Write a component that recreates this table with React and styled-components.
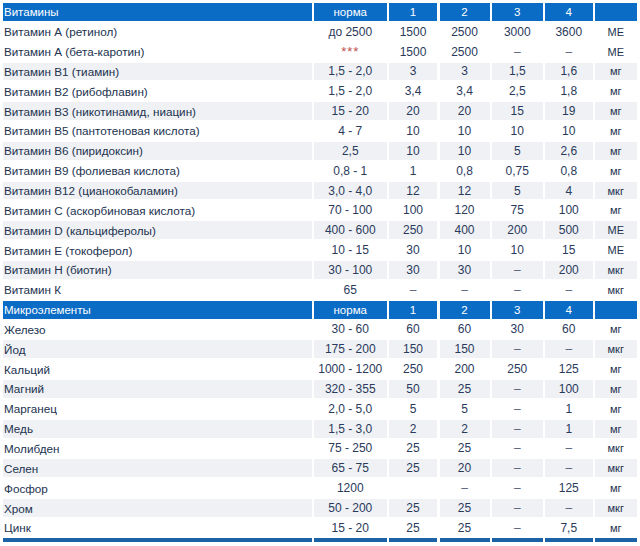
import React from "react";
import styled, { createGlobalStyle } from "styled-components";

const GlobalStyle = createGlobalStyle`
  html, body {
    margin: 0;
    padding: 0;
    background: #ffffff;
  }
  body {
    font-family: "Liberation Sans", Arial, sans-serif;
  }
`;

const DASH = "–";

const vitamins = [
  ["Витамин А (ретинол)", "до 2500", "1500", "2500", "3000", "3600", "МЕ"],
  ["Витамин А (бета-каротин)", "***", "1500", "2500", DASH, DASH, "МЕ"],
  ["Витамин В1 (тиамин)", "1,5 - 2,0", "3", "3", "1,5", "1,6", "мг"],
  ["Витамин В2 (рибофлавин)", "1,5 - 2,0", "3,4", "3,4", "2,5", "1,8", "мг"],
  ["Витамин В3 (никотинамид, ниацин)", "15 - 20", "20", "20", "15", "19", "мг"],
  ["Витамин В5 (пантотеновая кислота)", "4 - 7", "10", "10", "10", "10", "мг"],
  ["Витамин В6 (пиридоксин)", "2,5", "10", "10", "5", "2,6", "мг"],
  ["Витамин В9 (фолиевая кислота)", "0,8 - 1", "1", "0,8", "0,75", "0,8", "мг"],
  ["Витамин В12 (цианокобаламин)", "3,0 - 4,0", "12", "12", "5", "4", "мкг"],
  ["Витамин С (аскорбиновая кислота)", "70 - 100", "100", "120", "75", "100", "мг"],
  ["Витамин D (кальциферолы)", "400 - 600", "250", "400", "200", "500", "МЕ"],
  ["Витамин Е (токоферол)", "10 - 15", "30", "10", "10", "15", "МЕ"],
  ["Витамин Н (биотин)", "30 - 100", "30", "30", DASH, "200", "мкг"],
  ["Витамин К", "65", DASH, DASH, DASH, DASH, "мкг"],
];

const minerals = [
  ["Железо", "30 - 60", "60", "60", "30", "60", "мг"],
  ["Йод", "175 - 200", "150", "150", DASH, DASH, "мкг"],
  ["Кальций", "1000 - 1200", "250", "200", "250", "125", "мг"],
  ["Магний", "320 - 355", "50", "25", DASH, "100", "мг"],
  ["Марганец", "2,0 - 5,0", "5", "5", DASH, "1", "мг"],
  ["Медь", "1,5 - 3,0", "2", "2", DASH, "1", "мг"],
  ["Молибден", "75 - 250", "25", "25", DASH, DASH, "мкг"],
  ["Селен", "65 - 75", "25", "20", DASH, DASH, "мкг"],
  ["Фосфор", "1200", "", DASH, DASH, "125", "мг"],
  ["Хром", "50 - 200", "25", "25", DASH, DASH, "мкг"],
  ["Цинк", "15 - 20", "25", "25", DASH, "7,5", "мг"],
];

// vitamins: stripes start from В1, first two rows stay white
const vitaminStriped = (i) => i >= 2 && i % 2 === 0;
const mineralStriped = (i) => i % 2 === 1;

export default function App() {
  const renderRow = (row, striped, key) =>
    row.map((value, c) => {
      if (c === 0) {
        return (
          <NameCell key={key + "-" + c} $striped={striped}>
            {value}
          </NameCell>
        );
      }
      if (c === 6) {
        return (
          <UnitCell key={key + "-" + c} $striped={striped}>
            {value}
          </UnitCell>
        );
      }
      return (
        <ValueCell key={key + "-" + c} $striped={striped}>
          {value === "***" ? <Stars>***</Stars> : value === DASH ? <Dash>{DASH}</Dash> : value}
        </ValueCell>
      );
    });

  const renderHeader = (title, key) =>
    [title, "норма", "1", "2", "3", "4", ""].map((value, c) => (
      <HeadCell key={key + "-" + c} $left={c === 0}>
        {value}
      </HeadCell>
    ));

  return (
    <Page>
      <GlobalStyle />
      <Grid>
        {renderHeader("Витамины", "vh")}
        {vitamins.map((row, i) => renderRow(row, vitaminStriped(i), "v" + i))}
        {renderHeader("Микроэлементы", "mh")}
        {minerals.map((row, i) => renderRow(row, mineralStriped(i), "m" + i))}
        {Array.from({ length: 7 }).map((_, c) => (
          <FootBar key={"f" + c} />
        ))}
      </Grid>
    </Page>
  );
}

const Page = styled.div`
  padding: 3px 0 0 3px;
  width: 640px;
  height: 546px;
  box-sizing: border-box;
  overflow: hidden;
`;

const Grid = styled.div`
  display: grid;
  grid-template-columns: 308.5px 72.5px 48px 50px 50.5px 47.5px 41.5px;
  grid-auto-rows: 17.85px;
  column-gap: 2.5px;
  row-gap: 2px;
  font-size: 12px;
  color: #2a3a5c;
`;

const Cell = styled.div`
  display: flex;
  align-items: center;
  white-space: nowrap;
  overflow: hidden;
  background: ${(p) => (p.$striped ? "#eff1f4" : "#ffffff")};
`;

const HeadCell = styled.div`
  display: flex;
  align-items: center;
  justify-content: ${(p) => (p.$left ? "flex-start" : "center")};
  padding-left: ${(p) => (p.$left ? "1px" : "0")};
  background: #0b6cc6;
  color: #ffffff;
  font-size: 11.5px;
  white-space: nowrap;
`;

const NameCell = styled(Cell)`
  padding-left: 1px;
  font-size: 11.7px;
  color: #22324f;
`;

const ValueCell = styled(Cell)`
  justify-content: center;
`;

const UnitCell = styled(Cell)`
  justify-content: center;
  font-size: 11px;
  color: #22324f;
`;

const Stars = styled.span`
  color: #c0504d;
  font-size: 13px;
  letter-spacing: 1px;
`;

const Dash = styled.span`
  color: #55627c;
`;

const FootBar = styled.div`
  align-self: start;
  height: 4px;
  margin-top: -1px;
  background: #1c62a6;
`;
